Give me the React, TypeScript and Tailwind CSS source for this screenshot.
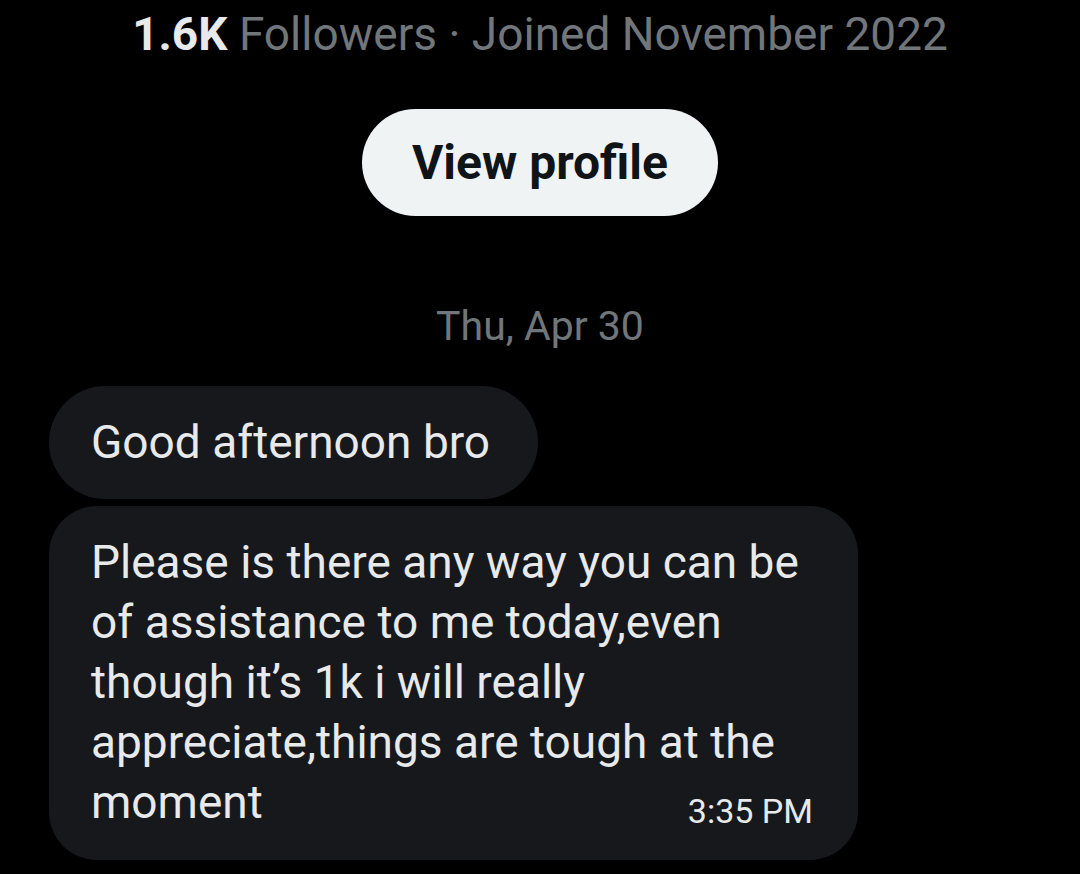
import React from 'react'

export default function App() {
  return (
    <div className="min-h-[874px] w-[1080px] bg-black text-[#e7e9ea] font-['Roboto','Noto_Sans',sans-serif]">
      <div className="flex flex-col items-center">
        <div className="mt-[6px] text-[46px] leading-[56px] text-[#71767b]">
          <span className="font-bold text-[#e7e9ea]">1.6K</span> Followers · Joined November 2022
        </div>
        <button className="mt-[47px] h-[107px] w-[356px] rounded-full bg-[#eff3f4] text-[48px] font-bold text-[#0f1419]">
          View profile
        </button>
        <div className="mt-[86px] text-[41px] leading-[48px] text-[#71767b]">Thu, Apr 30</div>
      </div>

      <div className="mt-[36px] flex flex-col items-start gap-[7px] pl-[49px]">
        <div className="flex h-[113px] items-center rounded-full bg-[#16181c] pl-[42px] pr-[48px] text-[46px]">
          Good afternoon bro
        </div>
        <div className="w-[809px] rounded-[48px] bg-[#16181c] px-[42px] pb-[28px] pt-[26px] text-[46px] leading-[60px]">
          <p>
            Please is there any way you can be
            <br />
            of assistance to me today,even
            <br />
            though it’s 1k i will really
            <br />
            appreciate,things are tough at the
          </p>
          <div className="flex items-end justify-between">
            <span>moment</span>
            <span className="mr-[3px] text-[34px] leading-[41px]">3:35 PM</span>
          </div>
        </div>
      </div>
    </div>
  )
}
